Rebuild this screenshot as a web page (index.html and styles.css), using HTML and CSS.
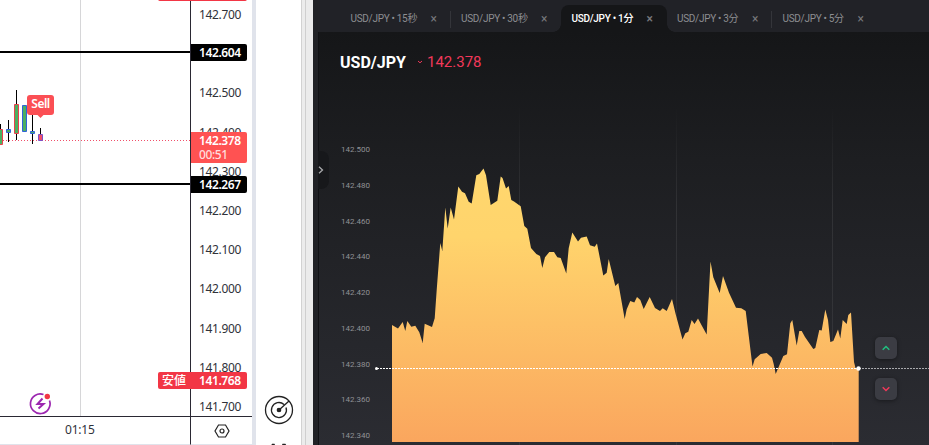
FILE: index.html
```html
<!DOCTYPE html>
<html lang="ja">
<head>
  <meta charset="UTF-8" />
  <title>USD/JPY</title>
  <link rel="stylesheet" href="styles.css">
</head>
<body>

  <!-- Candle chart -->
  <div class="candles">
    <div class="plot">
      <svg width="190" height="416" viewBox="0 0 190 416">
        <path d="M80.5 0V416" stroke="#d6d6d8" />
        <path d="M0 140.5H190" stroke="#f0506a" stroke-dasharray="1 2" />
        <path d="M0 52H190M0 184H190" stroke="#000" stroke-width="2" />
        <path d="M.5 124V129M8.5 120V142M16.5 90V140M32.5 110V144M40.5 128V135" stroke="#000" />
        <g fill="#4caf60" stroke="#e8414c">
          <path d="M-2.500 129.500H2.500V144.500H-2.500Z" />
          <path d="M14.500 104.500H18.500V133.500H14.500Z" />
        </g>
        <g fill="#4caf60" stroke="#2f62d9">
          <path d="M6.500 129.500H10.500V132.500H6.500Z" />
          <path d="M22.500 105.500H26.500V131.500H22.500Z" />
          <path d="M30.500 131.500H34.500V133.500H30.500Z" />
        </g>
        <path d="M38.500 134.500H42.500V140.500H38.500Z" fill="#f0506a" stroke="#7a50c8" />
        <path d="M37 114.500H44L40.500 118Z" fill="#fb4f54" />
        <path d="M43.500 394.500A9.800 9.800 0 1 0 49.500 400.500" fill="none" stroke="#9c27b0" stroke-width="1.700" />
        <path d="M42.500 398.500L37.500 404H43.500L38.500 408.500" fill="none" stroke="#9c27b0" stroke-width="2" />
        <circle cx="47.300" cy="396.500" r="2.700" fill="#f23645" />
      </svg>
      <span class="sell">Sell</span>
    </div>
    <div class="scale">
      <span>142.700</span>
      <span></span>
      <span>142.500</span>
      <span>142.400</span>
      <span>142.300</span>
      <span>142.200</span>
      <span>142.100</span>
      <span>142.000</span>
      <span>141.900</span>
      <span>141.800</span>
      <span>141.700</span>
    </div>
    <div class="time">01:15</div>
    <div class="gear">
      <svg width="16" height="14" viewBox="0 0 16 14" fill="none" stroke="#222" stroke-width="1.200">
        <path d="M4.500 1H11.500L15 7L11.500 13H4.500L1 7Z" />
        <circle cx="8" cy="7" r="2" />
      </svg>
    </div>
    <div class="tag high"></div>
    <div class="tag line1">142.604</div>
    <div class="tag now">142.378<small>00:51</small></div>
    <div class="tag line2">142.267</div>
    <div class="tag low"><b>安値</b>141.768</div>
  </div>

  <!-- Tool strip -->
  <div class="tools">
    <svg width="30" height="30" viewBox="0 0 30 30" fill="none" stroke="#222" stroke-width="1.300">
      <circle cx="15" cy="15" r="13.500" />
      <path d="M20 9.500A7.500 7.500 0 1 0 22 12.500M15 15L25 6" />
      <circle cx="15" cy="15" r="1.700" fill="#222" />
    </svg>
    <svg class="more" width="20" height="4" viewBox="0 0 20 4" fill="none" stroke="#222" stroke-width="1.500">
      <path d="M2 4L3.500 1.500H5L6 4M13 4L14 1.500H16L17.500 4" />
    </svg>
  </div>
  <div class="edge"></div>

  <!-- Trading app -->
  <div class="app">
    <div class="tabs">
      <div class="tab wide">USD/JPY • 15秒<i>×</i></div>
      <div class="tab wide line">USD/JPY • 30秒<i>×</i></div>
      <div class="tab active">USD/JPY • 1分<i>×</i></div>
      <div class="tab">USD/JPY • 3分<i>×</i></div>
      <div class="tab line">USD/JPY • 5分<i>×</i></div>
    </div>
    <div class="pair">
      <h1>USD/JPY</h1>
      <svg width="6" height="4" viewBox="0 0 6 4"><path d="M1 1L3 2.800L5 1" fill="none" stroke="#f2385a" /></svg>
      <span>142.378</span>
    </div>
    <div class="chart">
      <div class="prices">
        <span>142.500</span>
        <span>142.480</span>
        <span>142.460</span>
        <span>142.440</span>
        <span>142.420</span>
        <span>142.400</span>
        <span>142.380</span>
        <span>142.360</span>
        <span>142.340</span>
      </div>
      <svg width="556" height="361" viewBox="373 84 556 361">
        <defs>
          <linearGradient id="area" gradientUnits="userSpaceOnUse" x1="0" y1="168" x2="0" y2="442">
            <stop offset="0" stop-color="#ffd76e" />
            <stop offset="0.250" stop-color="#ffd46c" />
            <stop offset="1" stop-color="#faa65e" />
          </linearGradient>
          <linearGradient id="grid" gradientUnits="userSpaceOnUse" x1="0" y1="105" x2="0" y2="445">
            <stop offset="0" stop-color="#fff" stop-opacity="0" />
            <stop offset="0.300" stop-color="#fff" stop-opacity="0.080" />
            <stop offset="1" stop-color="#fff" stop-opacity="0.050" />
          </linearGradient>
        </defs>
        <path d="M519 105h1V445h-1ZM676 105h1V445h-1ZM832 105h1V445h-1Z" fill="url(#grid)" />
        <path fill="url(#area)" d="M392 442V325L398 328.500L402.700 322L405.300 331L407.300 321L411.300 326.700L415.300 325.700L419.300 332.300L422.700 343L424.700 323.700L432 327L434.700 318.300L436.700 290L440.300 243L442.300 251L445.300 207.500L447.700 228.500L450.700 207.500L454 219.500L458.300 186.500L462 191.700L465 193.300L468.700 201.700L471.700 203.500L476.300 175.300L479.300 174L483.500 168.500L486 175.300L490.700 205L497.300 200.700L500.700 176.500L502.500 178L506 188.500L508.700 186L511.300 200L514 201.500L520.700 206.300L524.300 226L527.300 228.700L531 248L536.300 254L540 256L542.300 268L545 257.300L549.300 252L554 252L557.300 257.300L560.700 258L566.300 273.500L568.700 248.300L572.300 232.500L578 241.500L581 237.700L586.700 236.500L590 245.300L594.700 246.700L597 243.500L603.300 275.500L606.700 272.700L608.700 259L615.300 286L618.300 283L624.700 319L626.700 309.300L630.300 301L634.300 302.500L637 297L640.300 300L643.700 309L649.700 297L655 308L660 311L662.700 308.300L666.700 311L672 299L675.700 314.300L682.500 339.500L685.300 333.300L688.300 331.700L691.700 320L694.500 324L698 318.500L702 326L706.700 334.500L710.500 261.500L713.300 277.300L719.700 293L723 276L729 292.700L736 307.700L741.300 308.300L745.700 311L752.500 366.500L754.700 359.300L760.700 354L766.700 353L772 357.700L773.700 364L775.700 374L783.300 356L787 354.300L790.300 323.300L792.300 320L796.700 345.500L799.300 331L801.700 331L805 337L813.300 349L815.300 348L819.300 330L821.700 330.500L825.300 309.500L828 320L830.300 342L833.300 341L838 329.500L840.300 338.500L842.700 320L846.700 324L848.300 315L851 312.500L854 362L855.500 368H858.700V442Z" />
        <path d="M377 368.500H858" stroke="#fff" stroke-dasharray="2 1" />
        <path d="M859 368.500H929" stroke="#a9aaae" stroke-dasharray="2 1" />
        <circle cx="376.500" cy="368.500" r="1.500" fill="#fff" />
        <circle cx="858.500" cy="368.500" r="2.200" fill="#fff" />
      </svg>
      <div class="orders">
        <button class="up"><svg width="8" height="6" viewBox="0 0 8 6"><path d="M.7 4.700L4 1.500L7.300 4.700" /></svg></button>
        <button class="down"><svg width="8" height="6" viewBox="0 0 8 6"><path d="M.7 1.300L4 4.500L7.300 1.300" /></svg></button>
      </div>
    </div>
    <div class="handle">
      <svg width="6" height="8" viewBox="0 0 6 8"><path d="M1 .8L4.500 4L1 7.200" fill="none" stroke="#a8a9ac" stroke-width="1.300" /></svg>
    </div>
  </div>

</body>
</html>
```
FILE: styles.css
```css
* {
  box-sizing: border-box;
  margin: 0;
  padding: 0;
}

body {
  display: flex;
  width: 929px;
  height: 445px;
  overflow: hidden;
  background: #fff;
  font-family: Roboto, "Noto Sans CJK JP", sans-serif;
}

svg {
  display: block;
}

.candles {
  position: relative;
  display: grid;
  grid-template-columns: 191px 61px;
  grid-template-rows: 417px 28px;
  width: 256px;
  height: 445px;
  border-right: 4px solid #e0e3eb;
  font-family: "Noto Sans", "Noto Sans CJK JP", sans-serif;
  font-size: 12px;
  letter-spacing: -0.35px;
  color: #30323a;
}

.plot,
.scale {
  border-bottom: 1px solid #2a2833;
  overflow: hidden;
}

.plot,
.time {
  border-right: 1px solid #2a2833;
}

.scale {
  margin-top: -5px;
  padding-left: 8px;
}

.scale span {
  display: block;
  height: 39.2px;
  line-height: 39.2px;
}

.time,
.gear {
  border-bottom: 1px solid #e0e3eb;
}

.time {
  padding-left: 65px;
  line-height: 26px;
  letter-spacing: -0.2px;
}

.gear {
  display: flex;
  align-items: center;
  justify-content: center;
}

.sell {
  position: absolute;
  left: 27px;
  top: 95px;
  width: 27px;
  height: 20px;
  border-radius: 3px;
  background: #fb4f54;
  color: #fff;
  font-weight: 600;
  line-height: 18px;
  text-align: center;
  letter-spacing: -0.5px;
}

.tag {
  position: absolute;
  left: 191px;
  width: 56px;
  height: 17px;
  padding-left: 8px;
  border-radius: 0 2px 2px 0;
  background: #000;
  color: #fff;
  font-weight: 600;
  line-height: 17px;
  letter-spacing: -0.4px;
}

.line1 {
  top: 44px;
}

.line2 {
  top: 176px;
}

.now {
  top: 132px;
  height: 31px;
  background: #ff5252;
}

.now small {
  display: block;
  margin-top: -3px;
  font-size: 12px;
  font-weight: 500;
  color: #ffdcdc;
}

.low,
.high {
  left: 158px;
  width: 89px;
  border-radius: 2px;
  background: #f23645;
}

.low {
  display: flex;
  top: 372px;
  padding-left: 4px;
}

.low b {
  width: 37px;
  font-weight: 500;
  letter-spacing: 0;
}

.high {
  top: -16px;
}

.tools {
  display: flex;
  flex-direction: column;
  align-items: center;
  width: 45px;
  padding-top: 395px;
}

.tools svg {
  flex-shrink: 0;
}

.more {
  margin-top: 18px;
}

.edge {
  width: 12px;
  border-left: 1px solid #d2d2d2;
  background: linear-gradient(90deg, #ececec 3px, #cfcfcf 3px, #cfcfcf 4px, #ebebeb 4px);
}

.app {
  position: relative;
  width: 616px;
  height: 445px;
  border-left: 5px solid #212226;
  background: linear-gradient(#151618 32px, #1d1e21 160px, #2b2c32);
  box-shadow: inset 1px 0 #111215;
}

.tabs {
  display: flex;
  height: 32px;
  padding: 5px 0 0 22px;
  background: #212227;
}

.tab {
  position: relative;
  display: flex;
  justify-content: space-between;
  width: 105.5px;
  height: 27px;
  padding: 0 14px 0 10.5px;
  font-size: 10px;
  line-height: 28px;
  letter-spacing: -0.3px;
  white-space: nowrap;
  color: #8d8e92;
}

.wide {
  width: 110.5px;
}

.tab i {
  font-size: 12px;
  font-style: normal;
  color: #77787c;
}

.line::before {
  content: "";
  position: absolute;
  left: -1px;
  top: 6px;
  width: 1px;
  height: 17px;
  background: #34353a;
}

.active {
  border-radius: 8px 8px 0 0;
  background: #151618;
  color: #fff;
  font-weight: 500;
}

/* curved feet of the open tab */
.active::before,
.active::after {
  content: "";
  position: absolute;
  bottom: 0;
  width: 8px;
  height: 8px;
}

.active::before {
  left: -8px;
  background: radial-gradient(circle at 0 0, transparent 7.5px, #151618 8px);
}

.active::after {
  right: -8px;
  background: radial-gradient(circle at 100% 0, transparent 7.5px, #151618 8px);
}

.pair {
  display: flex;
  align-items: center;
  height: 52px;
  padding: 8px 0 0 22px;
  font-size: 15px;
  color: #f2385a;
}

.pair h1 {
  width: 77px;
  font-size: 16px;
  font-weight: 700;
  color: #fff;
}

.pair span {
  margin-left: 4px;
}

.chart {
  display: flex;
  height: 361px;
}

.prices {
  width: 55px;
  padding: 48px 0 0 23px;
  font-size: 8px;
  color: #909195;
}

.prices span {
  display: block;
  height: 35.75px;
  line-height: 36px;
}

.orders {
  position: absolute;
  left: 557px;
  top: 337px;
}

.orders button {
  display: flex;
  align-items: center;
  justify-content: center;
  width: 22px;
  height: 22px;
  margin-bottom: 19px;
  border: none;
  border-radius: 5px;
  background: #3b3c43;
  box-shadow: 0 1px 4px rgba(0, 0, 0, 0.4);
}

.orders path {
  fill: none;
  stroke-width: 1.5;
}

.up path {
  stroke: #20c080;
}

.down path {
  stroke: #f2385a;
}

.handle {
  position: absolute;
  left: 0;
  top: 151px;
  display: flex;
  align-items: center;
  width: 11px;
  height: 38px;
  border-radius: 0 8px 8px 0;
  background: #17181b;
}
```
